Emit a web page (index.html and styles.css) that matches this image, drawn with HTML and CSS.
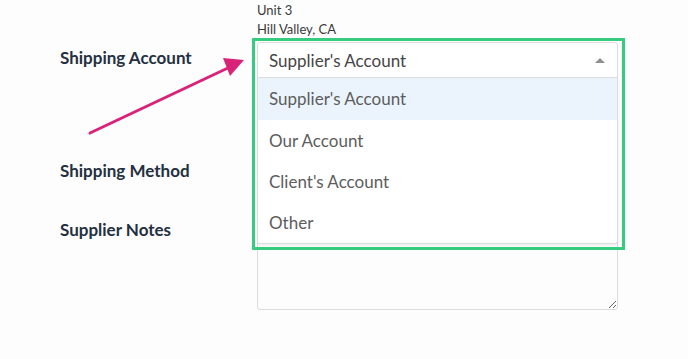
FILE: index.html
```html
<!DOCTYPE html>
<html lang="en">
<head>
    <meta charset="UTF-8">
    <meta name="viewport" content="width=device-width, initial-scale=1.0">
    <title>Supplier Order</title>
    <link rel="stylesheet" href="styles.css">
</head>
<body>
    <div class="page">
        <div class="row address-row">
            <div class="label"></div>
            <div class="address">
                <div>Unit 3</div>
                <div>Hill Valley, CA</div>
            </div>
        </div>

        <div class="row account-row">
            <div class="label">Shipping Account</div>
            <div class="field">
                <div class="select open">
                    <span>Supplier's Account</span>
                    <span class="caret"></span>
                </div>
                <ul class="options">
                    <li class="active">Supplier's Account</li>
                    <li>Our Account</li>
                    <li>Client's Account</li>
                    <li>Other</li>
                </ul>
                <div class="highlight"></div>
            </div>
        </div>

        <div class="row method-row">
            <div class="label">Shipping Method</div>
            <div class="field">
                <div class="select"><span></span><span class="caret down"></span></div>
            </div>
        </div>

        <div class="row notes-row">
            <div class="label">Supplier Notes</div>
            <div class="field">
                <textarea class="notes"></textarea>
            </div>
        </div>

        <svg class="pointer" width="180" height="100" viewBox="0 0 180 100">
            <line x1="10" y1="83" x2="150" y2="17" stroke="#d92379" stroke-width="3" stroke-linecap="round"/>
            <polygon points="164,10 143,8 150,26" fill="#d92379"/>
        </svg>
    </div>
</body>
</html>
```
FILE: styles.css
```css
body {
    margin: 0;
    background-color: #fdfdfd;
    font-family: Lato, "Open Sans", Arial, sans-serif;
}
.page {
    position: relative;
    padding-left: 60px;
}
.row {
    display: grid;
    grid-template-columns: 197px 361px;
}
.label {
    font-weight: bold;
    font-size: 17px;
    color: #243040;
}
.address {
    font-size: 13px;
    line-height: 19px;
    color: #3a3a3a;
    padding-top: 1px;
}
.account-row {
    margin-top: 3px;
}
.account-row .label {
    padding-top: 5px;
}
.field {
    position: relative;
}
.select {
    height: 36px;
    box-sizing: border-box;
    border: 1px solid #dcdcdc;
    border-radius: 3px;
    background: #fff;
    display: flex;
    align-items: center;
    justify-content: space-between;
    padding: 0 11px;
    font-size: 17px;
    color: #454545;
}
.select.open {
    border-radius: 3px 3px 0 0;
}
.caret {
    width: 0;
    height: 0;
    border-left: 5px solid transparent;
    border-right: 5px solid transparent;
    border-bottom: 5px solid #8f8f8f;
    margin-right: 1px;
}
.caret.down {
    border-bottom: none;
    border-top: 5px solid #8f8f8f;
}
.options {
    position: absolute;
    top: 36px;
    left: 0;
    right: 0;
    margin: 0;
    padding: 0;
    list-style: none;
    background: #fff;
    border: 1px solid #dcdcdc;
    border-top: none;
    border-radius: 0 0 3px 3px;
    box-shadow: 0 2px 3px rgba(0, 0, 0, 0.06);
    z-index: 2;
}
.options li {
    height: 41px;
    line-height: 41px;
    padding-left: 11px;
    font-size: 17px;
    color: #5d5d5d;
}
.options li.active {
    height: 42px;
    background-color: #ebf4fd;
}
.highlight {
    position: absolute;
    top: -4px;
    left: -5px;
    width: 367px;
    height: 206px;
    border: 3px solid #35cc80;
    z-index: 3;
}
.method-row {
    margin-top: 76px;
}
.method-row .label {
    padding-top: 6px;
}
.notes-row {
    margin-top: 24px;
}
.notes-row .label {
    padding-top: 5px;
}
.notes {
    display: block;
    width: 361px;
    height: 96px;
    box-sizing: border-box;
    border: 1px solid #dcdcdc;
    border-radius: 3px;
    background: #fdfdfd;
    resize: vertical;
    margin: 0;
}
.pointer {
    position: absolute;
    left: 80px;
    top: 50px;
}
```
